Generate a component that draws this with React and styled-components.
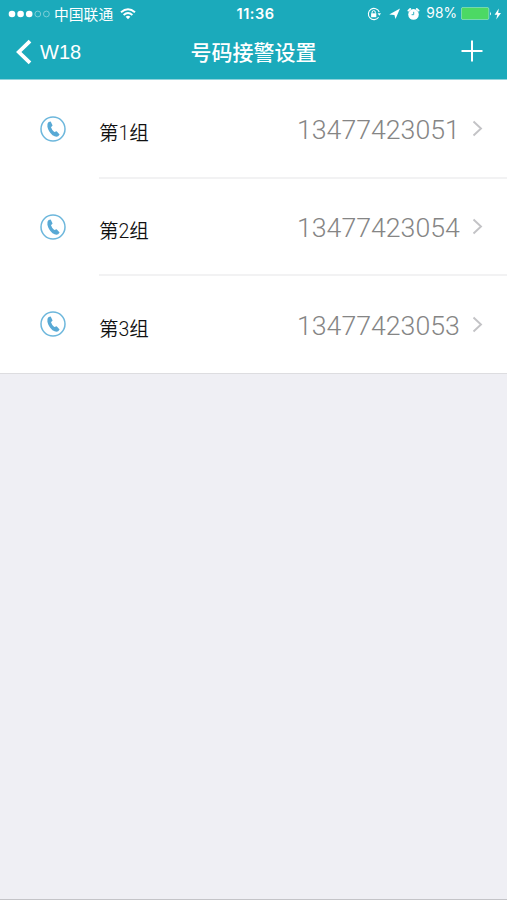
import styled, { createGlobalStyle } from "styled-components";

const GlobalStyle = createGlobalStyle`
* {
box-sizing: border-box;
}
body {
margin: 0;
background: #efeff4;
font-family: "Liberation Sans", "Noto Sans CJK SC", sans-serif;
}
`
const Screen = styled.div`
display: flex;
flex-direction: column;
width: 507px;
height: 900px;
overflow: hidden;
background: #efeff4;
border-bottom: 1px solid #c4c4c8;
`
const Header = styled.header`
height: 80px;
flex: none;
background: #1baabb;
border-bottom: 1px solid #8fd3dc;
color: #fff;
`
const StatusBar = styled.div`
display: grid;
grid-template-columns: 1fr auto 1fr;
align-items: center;
height: 27px;
padding: 0 4px 0 8px;
`
const StatusLeft = styled.div`
display: flex;
align-items: center;
`
const Signal = styled.svg`
width: 42px;
height: 10px;
margin-right: 4px;
`
const Carrier = styled.span`
font-family: "Noto Sans CJK SC", sans-serif;
font-size: 14.8px;
line-height: 27px;
margin: -1px 7px 0 0;
`
const Time = styled.span`
font-family: Inter, sans-serif;
font-size: 14.5px;
font-weight: 600;
letter-spacing: 0.5px;
line-height: 27px;
`
const StatusRight = styled.div`
display: flex;
align-items: center;
justify-content: flex-end;
`
const Percent = styled.span`
font-family: Inter, sans-serif;
font-size: 13.8px;
line-height: 27px;
margin: 0 4px 0 6px;
`
const NavBar = styled.nav`
display: grid;
grid-template-columns: 1fr auto 1fr;
align-items: center;
height: 50px;
padding: 0 24px 0 15px;
`
const BackButton = styled.button`
display: flex;
align-items: center;
gap: 7px;
padding: 0;
border: none;
background: none;
color: inherit;
font-family: "Liberation Sans", sans-serif;
font-size: 20px;
line-height: 30px;
`
const Title = styled.h1`
margin: -2px -9px 0 0;
font-family: "Noto Sans CJK SC", sans-serif;
font-size: 21px;
font-weight: 500;
line-height: 30px;
`
const AddButton = styled.button`
display: flex;
justify-self: end;
margin-top: -2px;
padding: 0;
border: none;
background: none;
color: inherit;
`
const List = styled.ul`
margin: 0;
padding: 0;
list-style: none;
background: #fff;
border-bottom: 1px solid #dddde0;
`
const Row = styled.li`
display: flex;
height: 97.7px;
padding-left: 40px;
`
const PhoneBadge = styled.svg`
width: 26px;
height: 26px;
flex: none;
margin: 36px 33px 0 0;
`
const RowBody = styled.div`
display: flex;
flex: 1;
align-items: center;
margin-bottom: ${({ $last }) => $last ? "0" : "-1px"};
padding: 4px 24px 0 0;
border-bottom: ${({ $last }) => $last ? "none" : "2px solid #f2f2f3"};
`
const GroupName = styled.span`
flex: 1;
padding-top: 2px;
color: #111;
font-family: Roboto, "Noto Sans CJK SC", sans-serif;
font-size: 19.5px;
font-weight: 350;
`
const PhoneNumber = styled.span`
width: 165px;
margin-right: 10px;
color: #858585;
font-family: Roboto, sans-serif;
font-size: 26.7px;
font-weight: 300;
`
const Chevron = styled.svg`
width: 11px;
height: 17px;
margin-bottom: 3px;
`

const groups = [
    { name: "第1组", phone: "13477423051" },
    { name: "第2组", phone: "13477423054" },
    { name: "第3组", phone: "13477423053" }
]

const GroupRow = ({ group, last }) => {
    return (
        <Row>
            <PhoneBadge viewBox="0 0 26 26">
                <circle cx="13" cy="13" r="12" fill="none" stroke="#6db7dc" strokeWidth="1.5" />
                <path d="M8.6 6.1 L10.7 5.5 L12.6 9.6 L11 11.2 Q11.8 13.9 14.3 15.9 L16.6 15.2 L19.6 18.4 L18.2 20.3 Q15.7 21.4 12.5 19.2 Q8.5 15.8 7.4 10.7 Q7 7.4 8.6 6.1 Z" fill="#58a9d5" />
            </PhoneBadge>
            <RowBody $last={last}>
                <GroupName>{group.name}</GroupName>
                <PhoneNumber>{group.phone}</PhoneNumber>
                <Chevron viewBox="0 0 11 17">
                    <path d="M1.5 1.5 L9 8.5 L1.5 15.5" fill="none" stroke="#c3c3c6" strokeWidth="1.9" />
                </Chevron>
            </RowBody>
        </Row>
    )
}

const App = () => {
    return (
        <>
        <GlobalStyle />
        <Screen>
            <Header>
                <StatusBar>
                    <StatusLeft>
                        <Signal viewBox="0 0 42 10">
                            <circle cx="4" cy="5" r="3.3" fill="#fff" />
                            <circle cx="12.6" cy="5" r="3.3" fill="#fff" />
                            <circle cx="21.2" cy="5" r="3.3" fill="#fff" />
                            <circle cx="29.8" cy="5" r="2.9" fill="none" stroke="#a4dce3" strokeWidth="0.7" />
                            <circle cx="38.4" cy="5" r="2.9" fill="none" stroke="#a4dce3" strokeWidth="0.7" />
                        </Signal>
                        <Carrier>中国联通</Carrier>
                        <svg width="16" height="12" viewBox="0 0 16 12" fill="none" stroke="#fff" strokeWidth="1.9">
                            <path d="M1 4.3 Q8 -2 15 4.3" />
                            <path d="M3.6 7 Q8 3.1 12.4 7" />
                            <path d="M5.6 8.7 Q8 6.7 10.4 8.7 L8 11.3 Z" fill="#fff" stroke="none" />
                        </svg>
                    </StatusLeft>
                    <Time>11:36</Time>
                    <StatusRight>
                        <svg width="14" height="14" viewBox="0 0 14 14" fill="none" stroke="#fff">
                            <path d="M12.2 5 A5.6 5.6 0 1 0 11.6 10.2" strokeWidth="1.1" />
                            <path d="M10.6 6.2 L14 6.2 L12.3 8.7 Z" fill="#fff" stroke="none" />
                            <rect x="4.1" y="6.3" width="5.2" height="3.9" fill="#fff" stroke="none" />
                            <path d="M5.1 6.5 V5.2 A1.6 1.6 0 0 1 8.3 5.2 V6.5" strokeWidth="1" />
                        </svg>
                        <svg width="26" height="14" viewBox="0 0 26 14">
                            <path d="M19 1.6 L14.5 12 L13.4 8 L8.2 7.4 Z" fill="#fff" />
                        </svg>
                        <svg width="13" height="14" viewBox="0 0 13 14">
                            <circle cx="6.5" cy="7.4" r="5.3" fill="#fff" />
                            <path d="M1.4 3.6 L3.2 2 M11.6 3.6 L9.8 2" stroke="#fff" strokeWidth="1.9" strokeLinecap="round" />
                            <path d="M6.7 4.8 V7.7 H4.6" fill="none" stroke="#1baabb" strokeWidth="0.9" />
                        </svg>
                        <Percent>98%</Percent>
                        <svg width="31" height="13" viewBox="0 0 31 13">
                            <rect x="0.4" y="0.4" width="27.4" height="12.2" rx="1.6" fill="#4cd964" stroke="#92e2ba" strokeWidth="0.8" />
                            <path d="M29 4.4 Q30.8 6.5 29 8.6 Z" fill="#fff" />
                        </svg>
                        <svg width="11" height="12" viewBox="0 0 11 12">
                            <path d="M6.8 0.4 L2.6 6.8 H5.3 L4.2 11.6 L9 5.1 H6.2 Z" fill="#fff" />
                        </svg>
                    </StatusRight>
                </StatusBar>
                <NavBar>
                    <BackButton>
                        <svg width="18" height="26" viewBox="0 0 18 26">
                            <path d="M15 2.2 L3.8 13 L15 23.8" fill="none" stroke="#fff" strokeWidth="3.8" />
                        </svg>
                        W18
                    </BackButton>
                    <Title>号码接警设置</Title>
                    <AddButton aria-label="添加">
                        <svg width="22" height="22" viewBox="0 0 22 22">
                            <path d="M11 0.5 V21.5 M0.5 11 H21.5" stroke="#fff" strokeWidth="2" />
                        </svg>
                    </AddButton>
                </NavBar>
            </Header>
            <List>
                {groups.map((group, i) => (
                    <GroupRow key={group.phone} group={group} last={i === groups.length - 1} />
                ))}
            </List>
        </Screen>
        </>
    )
}

export default App
